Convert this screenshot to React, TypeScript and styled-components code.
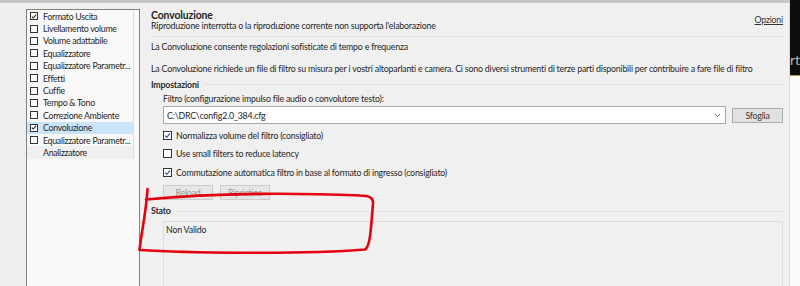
import React from 'react';
import styled, { createGlobalStyle } from 'styled-components';

const Global = createGlobalStyle`
  html, body { margin: 0; padding: 0; background: #f0f0f0; }
  #root { width: 800px; height: 286px; }
`;

const FONT = `Lato, "Liberation Sans", "Noto Sans", sans-serif`;

const Root = styled.div`
  position: relative;
  width: 800px;
  height: 286px;
  overflow: hidden;
  display: flex;
  font-family: ${FONT};
  font-size: 8.8px;
  letter-spacing: -0.2px;
  color: #262626;
  background: #f0f0f0;
`;

const AppColumn = styled.div`
  width: 790px;
  flex: none;
  display: flex;
  flex-direction: column;
`;

const TopBand = styled.div`
  height: 3px;
  flex: none;
  background: #c6c6c6;
`;

const Body = styled.div`
  flex: 1;
  display: flex;
  min-height: 0;
`;

const Gutter = styled.div`
  width: 26px;
  flex: none;
  background: #efefef;
`;

const ListBox = styled.div`
  margin-top: 6px;
  width: 107px;
  padding-right: 5px;
  flex: none;
  border: 1px solid #828282;
  border-bottom: none;
  background: #f9f9f9;
`;

const Rows = styled.div`
  width: 106px;
  border-right: 1px solid #dedede;
  display: flex;
  flex-direction: column;
`;

const Row = styled.div<{ $selected?: boolean; $muted?: boolean }>`
  height: 12.4px;
  display: flex;
  align-items: center;
  padding-left: 3px;
  gap: 5px;
  white-space: nowrap;
  letter-spacing: -0.3px;
  background: ${(p) => (p.$selected ? '#cce4f7' : p.$muted ? '#f0f0f0' : 'transparent')};
`;

const RowText = styled.span<{ $indent?: boolean }>`
  padding-left: ${(p) => (p.$indent ? '13px' : '0')};
`;

const ListCheck = styled.span`
  width: 6px;
  height: 6px;
  flex: none;
  border: 1px solid #333;
  background: #fff;
  display: flex;
  align-items: center;
  justify-content: center;
`;

const Panel = styled.div`
  flex: 1;
  min-width: 0;
  padding: 0 6px 0 11px;
  border-right: 1px solid #dadada;
  display: flex;
  flex-direction: column;
`;

const Header = styled.div`
  height: 34px;
  flex: none;
  display: flex;
  align-items: center;
  border-bottom: 1px solid #e2e2e2;
  padding-bottom: 1px;
  box-sizing: border-box;
`;

const HeaderText = styled.div`
  flex: 1;
  display: flex;
  flex-direction: column;
  padding-top: 2px;
`;

const Title = styled.div`
  font-size: 10.4px;
  font-weight: 700;
  letter-spacing: -0.1px;
  line-height: 12px;
  color: #1f1f1f;
`;

const Line = styled.div<{ $mt?: number }>`
  line-height: 10px;
  height: 10px;
  white-space: nowrap;
  margin-top: ${(p) => p.$mt ?? 0}px;
`;

const OptionsLink = styled.a`
  color: #333;
  text-decoration: underline;
  align-self: center;
`;

const GroupHeader = styled.div<{ $mt: number }>`
  margin-top: ${(p) => p.$mt}px;
  height: 10px;
  line-height: 10px;
  display: flex;
  align-items: center;
  gap: 5px;
  font-weight: 700;
  color: #2a2a2a;
  &::after {
    content: '';
    flex: 1;
    height: 1px;
    background: #e3e3e3;
  }
`;

const Indented = styled.div`
  padding-left: 12px;
  display: flex;
  flex-direction: column;
`;

const FileRow = styled.div`
  margin-top: 2px;
  height: 18px;
  display: flex;
  align-items: center;
  gap: 6px;
`;

const Combo = styled.div`
  flex: 1;
  height: 18px;
  box-sizing: border-box;
  border: 1px solid #a9a9a9;
  background: #fff;
  display: flex;
  align-items: center;
  padding: 0 4px 0 3px;
  color: #1e1e1e;
`;

const ComboText = styled.span`
  flex: 1;
`;

const Button = styled.button<{ $disabled?: boolean; $w: number }>`
  width: ${(p) => p.$w}px;
  height: 15px;
  padding: 0;
  box-sizing: border-box;
  font-family: ${FONT};
  font-size: 8.8px;
  letter-spacing: -0.2px;
  background: ${(p) => (p.$disabled ? '#e6e6e6' : '#e1e1e1')};
  border: 1px solid ${(p) => (p.$disabled ? '#cdcdcd' : '#adadad')};
  color: ${(p) => (p.$disabled ? '#9a9a9a' : '#333')};
  border-radius: 0;
`;

const Checks = styled.div`
  margin-top: 2px;
  display: flex;
  flex-direction: column;
`;

const CheckRow = styled.label`
  height: 18.5px;
  display: flex;
  align-items: center;
  gap: 4px;
  white-space: nowrap;
`;

const Box = styled.span`
  width: 7px;
  height: 7px;
  flex: none;
  border: 1px solid #333;
  background: #fff;
  display: flex;
  align-items: center;
  justify-content: center;
`;

const ButtonRow = styled.div`
  margin-top: 3.5px;
  display: flex;
  gap: 7px;
`;

const StatusBox = styled.div`
  margin: 5px 0 0 12px;
  flex: 1;
  border: 1px solid #dcdcdc;
  border-bottom: none;
  padding: 3px 2px;
  line-height: 10px;
`;

const RightStrip = styled.div`
  width: 10px;
  flex: none;
  display: flex;
  flex-direction: column;
  background: #fbfbfb;
`;

const DarkPane = styled.div`
  height: 76px;
  flex: none;
  background: #0d0d0d;
  border-bottom: 1px solid #b89a4a;
  overflow: hidden;
  display: flex;
  align-items: flex-end;
  padding-bottom: 8px;
  box-sizing: border-box;
  color: #b5b5b5;
  font-size: 14px;
  letter-spacing: 0;
  line-height: 14px;
`;

const Annotation = styled.svg`
  position: absolute;
  left: 0;
  top: 0;
  pointer-events: none;
`;

const Tick = ({ color }: { color: string }) => (
  <svg width="7" height="7" viewBox="0 0 7 7">
    <path d="M1 3.6 L2.8 5.3 L6 1.4" fill="none" stroke={color} strokeWidth="1.2" />
  </svg>
);

const Chevron = () => (
  <svg width="7" height="5" viewBox="0 0 7 5">
    <path d="M1 1 L3.5 3.5 L6 1" fill="none" stroke="#606060" strokeWidth="0.9" />
  </svg>
);

const items: { label: string; checked?: boolean; noBox?: boolean; selected?: boolean }[] = [
  { label: 'Formato Uscita', checked: true },
  { label: 'Livellamento volume' },
  { label: 'Volume adattabile' },
  { label: 'Equalizzatore' },
  { label: 'Equalizzatore Parametr...' },
  { label: 'Effetti' },
  { label: 'Cuffie' },
  { label: 'Tempo & Tono' },
  { label: 'Correzione Ambiente' },
  { label: 'Convoluzione', checked: true, selected: true },
  { label: 'Equalizzatore Parametr...' },
  { label: 'Analizzatore', noBox: true },
];

const options = [
  { label: 'Normalizza volume del filtro (consigliato)', on: true },
  { label: 'Use small filters to reduce latency', on: false },
  { label: 'Commutazione automatica filtro in base al formato di ingresso (consigliato)', on: true },
];

export default function App() {
  return (
    <Root>
      <Global />
      <AppColumn>
        <TopBand />
        <Body>
          <Gutter />
          <ListBox>
            <Rows>
              {items.map((it, i) => (
                <Row key={i} $selected={it.selected} $muted={it.noBox}>
                  {!it.noBox && <ListCheck>{it.checked && <Tick color="#222" />}</ListCheck>}
                  <RowText $indent={it.noBox}>{it.label}</RowText>
                </Row>
              ))}
            </Rows>
          </ListBox>
          <Panel>
            <Header>
              <HeaderText>
                <Title>Convoluzione</Title>
                <Line>Riproduzione interrotta o la riproduzione corrente non supporta l'elaborazione</Line>
              </HeaderText>
              <OptionsLink>Opzioni</OptionsLink>
            </Header>
            <Line $mt={5}>La Convoluzione consente regolazioni sofisticate di tempo e frequenza</Line>
            <Line $mt={12}>
              La Convoluzione richiede un file di filtro su misura per i vostri altoparlanti e camera. Ci sono diversi strumenti di terze parti disponibili per contribuire a fare file di filtro
            </Line>
            <GroupHeader $mt={5.5}>Impostazioni</GroupHeader>
            <Indented>
              <Line $mt={4.5}>Filtro (configurazione impulso file audio o convolutore testo):</Line>
              <FileRow>
                <Combo>
                  <ComboText>C:\DRC\config2.0_384.cfg</ComboText>
                  <Chevron />
                </Combo>
                <Button $w={51}>Sfoglia</Button>
              </FileRow>
              <Checks>
                {options.map((o) => (
                  <CheckRow key={o.label}>
                    <Box>{o.on && <Tick color="#2a5db0" />}</Box>
                    {o.label}
                  </CheckRow>
                ))}
              </Checks>
              <ButtonRow>
                <Button $w={50} $disabled>Reload</Button>
                <Button $w={50} $disabled>Ripristina</Button>
              </ButtonRow>
            </Indented>
            <GroupHeader $mt={6}>Stato</GroupHeader>
            <StatusBox>Non Valido</StatusBox>
          </Panel>
        </Body>
      </AppColumn>
      <RightStrip>
        <DarkPane>rt</DarkPane>
      </RightStrip>
      <Annotation width="800" height="286" viewBox="0 0 800 286">
        <path
          d="M147.5 189 C146.5 210 141.5 232 139.5 250 C180 252.5 300 255 365 249.5 C370 247 371 230 373 203 C373.5 197.5 368 195.5 360 195.5 C300 193 220 192.5 146 199.5"
          fill="none"
          stroke="#e3000f"
          strokeWidth="2.6"
          strokeLinecap="round"
          strokeLinejoin="round"
        />
      </Annotation>
    </Root>
  );
}
